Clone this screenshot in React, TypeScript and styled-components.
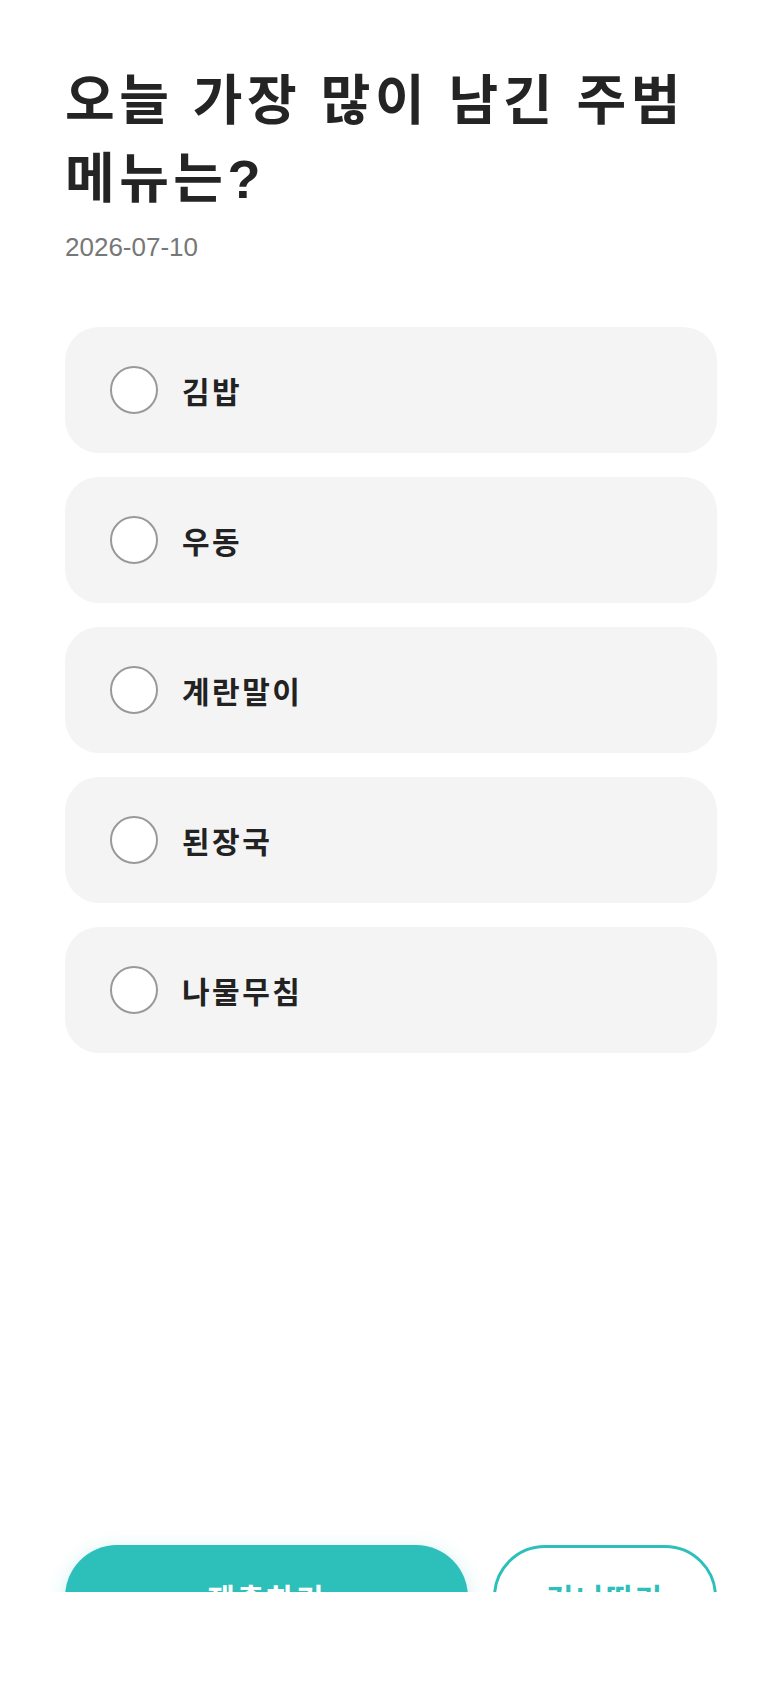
import React from 'react';
import styled, {createGlobalStyle} from "styled-components";

const options = ["김밥", "우동", "계란말이", "된장국", "나물무침"];

const GlobalStyle = createGlobalStyle`
  * {
    box-sizing: border-box;
  }

  body {
    margin: 0;
    background: #fff;
    font-family: "Liberation Sans", "Noto Sans CJK KR", sans-serif;
    word-break: keep-all;
  }
`

export default function App() {
    return (
        <>
            <GlobalStyle/>
            <Screen>
                <Content>
                    <Title>오늘 가장 많이 남긴 주범 메뉴는?</Title>
                    <DateText>2026-07-10</DateText>
                    <OptionList>
                        {options.map((option) => (
                            <Option key={option}>
                                <Radio type={"radio"} name={"menu"}/>
                                <OptionLabel>{option}</OptionLabel>
                            </Option>
                        ))}
                    </OptionList>
                </Content>
                <Footer>
                    <PrimaryButton type={"button"}>제출하기</PrimaryButton>
                    <SecondaryButton type={"button"}>건너뛰기</SecondaryButton>
                </Footer>
            </Screen>
        </>
    );
}

const Screen = styled.div`
  height: 1592px;
  overflow: hidden;
  display: flex;
  flex-direction: column;
  padding: 0 63px 0 65px;
`

const Content = styled.main`
  flex: 1;
  padding-top: 62px;
`

const Title = styled.h1`
  margin: 0;
  color: #242424;
  font-size: 54px;
  font-weight: 700;
  line-height: 78px;
  letter-spacing: 4.5px;
`

const DateText = styled.p`
  margin: 11px 0 0;
  color: #777;
  font-size: 26px;
  line-height: 36px;
`

const OptionList = styled.ul`
  list-style: none;
  margin: 62px 0 0;
  padding: 0;
  display: flex;
  flex-direction: column;
  gap: 24px;
`

const Option = styled.li`
  height: 126px;
  display: flex;
  align-items: center;
  gap: 24px;
  padding: 0 45px;
  background-color: #f4f4f4;
  border-radius: 34px;
`

const Radio = styled.input`
  appearance: none;
  margin: 0;
  width: 48px;
  height: 48px;
  flex: none;
  border: 2px solid #999;
  border-radius: 50%;
  background-color: #fff;
`

const OptionLabel = styled.span`
  color: #222;
  font-size: 30px;
  font-weight: 700;
  letter-spacing: 2.5px;
`

const Footer = styled.footer`
  flex: none;
  height: 47px;
  display: flex;
  gap: 25px;
  align-items: flex-start;
`

const BaseButton = styled.button`
  height: 104px;
  border-radius: 52px;
  font-family: "Liberation Sans", "Noto Sans CJK KR", sans-serif;
  font-size: 30px;
  font-weight: 700;
  letter-spacing: 2px;
  cursor: pointer;
`

const PrimaryButton = styled(BaseButton)`
  flex: 1;
  border: none;
  background-color: #2dc0bb;
  color: #fff;
  box-shadow: 0 4px 18px rgba(45, 192, 187, 0.25);
`

const SecondaryButton = styled(BaseButton)`
  width: 224px;
  flex: none;
  border: 3px solid #2dc0bb;
  background-color: #fff;
  color: #2dc0bb;
`
